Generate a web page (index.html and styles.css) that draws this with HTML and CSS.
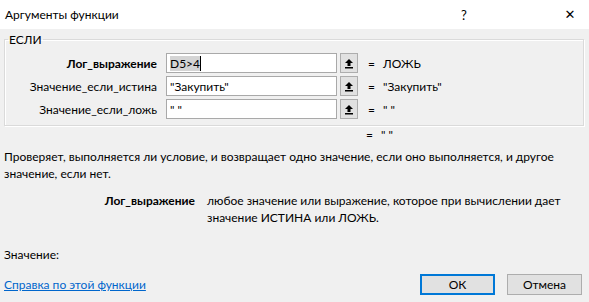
FILE: index.html
```html
<!DOCTYPE html>
<html lang="ru">
<head>
    <meta charset="UTF-8">
    <title>Аргументы функции</title>
    <link rel="stylesheet" href="styles.css">
</head>
<body>
    <div class="dialog">
        <div class="titlebar">
            <span class="title">Аргументы функции</span>
            <span class="title-help">?</span>
            <span class="title-close">✕</span>
        </div>

        <div class="content">
            <fieldset class="group">
                <legend>ЕСЛИ</legend>

                <div class="arg-row">
                    <label class="arg-label bold">Лог_выражение</label>
                    <div class="arg-input"><span class="sel">D5&gt;4</span><span class="caret"></span></div>
                    <button class="ref-button">
                        <svg width="10" height="11" viewBox="0 0 10 11"><path d="M5 1 L1 5 H3.5 V8 H6.5 V5 H9 Z" fill="#000"/><rect x="1" y="9" width="8" height="1.5" fill="#000"/></svg>
                    </button>
                    <span class="eq">=</span>
                    <span class="arg-value">ЛОЖЬ</span>
                </div>

                <div class="arg-row">
                    <label class="arg-label">Значение_если_истина</label>
                    <div class="arg-input">"Закупить"</div>
                    <button class="ref-button">
                        <svg width="10" height="11" viewBox="0 0 10 11"><path d="M5 1 L1 5 H3.5 V8 H6.5 V5 H9 Z" fill="#000"/><rect x="1" y="9" width="8" height="1.5" fill="#000"/></svg>
                    </button>
                    <span class="eq">=</span>
                    <span class="arg-value">"Закупить"</span>
                </div>

                <div class="arg-row">
                    <label class="arg-label">Значение_если_ложь</label>
                    <div class="arg-input">" "</div>
                    <button class="ref-button">
                        <svg width="10" height="11" viewBox="0 0 10 11"><path d="M5 1 L1 5 H3.5 V8 H6.5 V5 H9 Z" fill="#000"/><rect x="1" y="9" width="8" height="1.5" fill="#000"/></svg>
                    </button>
                    <span class="eq">=</span>
                    <span class="arg-value">" "</span>
                </div>
            </fieldset>

            <div class="result-row">
                <span class="eq">=</span>
                <span class="arg-value">" "</span>
            </div>

            <p class="func-desc">Проверяет, выполняется ли условие, и возвращает одно значение, если оно выполняется, и другое значение, если нет.</p>

            <div class="arg-desc">
                <span class="arg-desc-name">Лог_выражение</span>
                <span class="arg-desc-text">любое значение или выражение, которое при вычислении дает значение ИСТИНА или ЛОЖЬ.</span>
            </div>

            <div class="value-line">Значение:</div>

            <div class="footer">
                <a href="#" class="help-link">Справка по этой функции</a>
                <div class="buttons">
                    <button class="btn btn-ok">ОК</button>
                    <button class="btn">Отмена</button>
                </div>
            </div>
        </div>
    </div>
</body>
</html>
```

FILE: styles.css
```css
:root {
    --bg-dialog: #f0f0f0;
    --text: #000000;
    --border-input: #a9a9a9;
    --groove-dark: #dadada;
    --groove-light: #ffffff;
    --link: #0066cc;
}

* {
    margin: 0;
    padding: 0;
    box-sizing: border-box;
}

body {
    width: 589px;
    height: 302px;
    overflow: hidden;
    background-color: var(--bg-dialog);
    color: var(--text);
    font-family: "Segoe UI", Lato, sans-serif;
    font-size: 12px;
}

.dialog {
    height: 100%;
    display: flex;
    flex-direction: column;
}

/* Barre de titre */
.titlebar {
    height: 29px;
    background-color: #ffffff;
    display: flex;
    align-items: center;
    padding-left: 5px;
    flex-shrink: 0;
}

.title {
    flex: 1;
}

.title-help {
    width: 20px;
    text-align: center;
    margin-right: 86px;
    font-size: 13px;
}

.title-close {
    width: 20px;
    margin-right: 9px;
    text-align: center;
    font-family: "DejaVu Sans", sans-serif;
    font-size: 13px;
}

.content {
    flex: 1;
    padding: 3px 4px 0 4px;
    display: flex;
    flex-direction: column;
}

/* Groupe des arguments */
.group {
    border: 1px solid var(--groove-dark);
    box-shadow: 1px 1px 0 var(--groove-light), inset 1px 1px 0 var(--groove-light);
    padding: 6px 0 6px 0;
    margin: 0 1px 0 0;
    display: flex;
    flex-direction: column;
    gap: 3px;
}

.group legend {
    margin-left: 3px;
    padding: 0 1px;
}

.arg-row {
    display: flex;
    align-items: center;
    height: 20px;
}

.arg-label {
    width: 161px;
    text-align: right;
    padding-right: 9px;
    white-space: nowrap;
}

.bold {
    font-weight: bold;
}

.arg-input {
    width: 171px;
    height: 20px;
    background-color: #ffffff;
    border: 1px solid var(--border-input);
    padding: 1px 3px;
    display: flex;
    align-items: center;
    white-space: nowrap;
}

.sel {
    background-color: #d4d4d4;
    line-height: 15px;
}

.caret {
    width: 1px;
    height: 15px;
    background-color: #000;
}

.ref-button {
    width: 18px;
    height: 20px;
    margin-left: 3px;
    background-color: #e1e1e1;
    border: 1px solid #adadad;
    display: flex;
    align-items: center;
    justify-content: center;
}

.eq {
    margin-left: 10px;
    width: 15px;
}

.arg-value {
    white-space: nowrap;
}

.result-row {
    display: flex;
    height: 16px;
    margin-top: 0;
    padding-left: 352px;
    align-items: center;
}

.func-desc {
    margin-top: 6px;
    width: 560px;
    line-height: 17px;
}

.arg-desc {
    display: flex;
    margin-top: 10px;
    line-height: 17px;
}

.arg-desc-name {
    width: 203px;
    text-align: right;
    padding-right: 12px;
    font-weight: bold;
    flex-shrink: 0;
}

.arg-desc-text {
    width: 362px;
}

.value-line {
    margin-top: auto;
    margin-bottom: 12px;
}

.footer {
    display: flex;
    align-items: center;
    justify-content: space-between;
    padding-bottom: 7px;
}

.help-link {
    color: var(--link);
    text-decoration: underline;
}

.buttons {
    display: flex;
    gap: 12px;
    margin-right: 3px;
}

.btn {
    width: 75px;
    height: 21px;
    font-family: inherit;
    font-size: 12px;
    background-color: #e1e1e1;
    border: 1px solid #adadad;
}

.btn-ok {
    border: 2px solid #0078d7;
}
```
